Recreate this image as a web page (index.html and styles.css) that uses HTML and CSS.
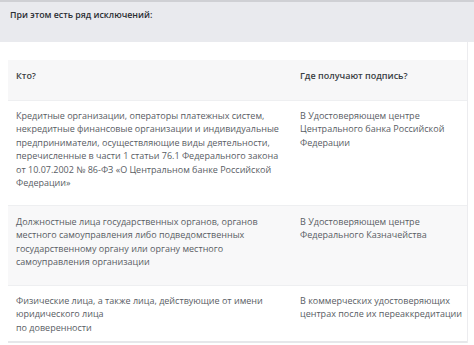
FILE: index.html
```html
<!DOCTYPE html>
<html lang="ru">
<head>
<meta charset="utf-8">
<link rel="stylesheet" href="styles.css">
</head>
<body>
<div class="band">
  <p class="title">При этом есть ряд исключений:</p>
</div>
<div class="wrap">
  <div class="tbl">
    <div class="row head">
      <div class="cell">Кто?</div>
      <div class="cell">Где получают подпись?</div>
    </div>
    <div class="row r1">
      <div class="cell">Кредитные организации, операторы платежных систем, некредитные финансовые организации и индивидуальные предприниматели, осуществляющие виды деятельности, перечисленные в части 1 статьи 76.1 Федерального закона от 10.07.2002 № 86-ФЗ «О Центральном банке Российской Федерации»</div>
      <div class="cell">В Удостоверяющем центре<br>Центрального банка Российской Федерации</div>
    </div>
    <div class="row r2 alt">
      <div class="cell">Должностные лица государственных органов, органов местного самоуправления либо подведомственных государственному органу или органу местного самоуправления организации</div>
      <div class="cell">В Удостоверяющем центре<br>Федерального Казначейства</div>
    </div>
    <div class="row r3">
      <div class="cell">Физические лица, а также лица, действующие от имени юридического лица<br>по доверенности</div>
      <div class="cell">В коммерческих удостоверяющих центрах после их переаккредитации</div>
    </div>
  </div>
</div>
</body>
</html>
```
FILE: styles.css
```css
html, body {
  margin: 0;
  padding: 0;
  background: #ffffff;
}
body {
  font-family: "Open Sans", "Noto Sans", sans-serif;
  width: 474px;
  height: 345px;
  overflow: hidden;
}
.band {
  height: 40px;
  background: #e9eaee;
  border-top: 2px solid #cfd0d4;
}
.title {
  margin: 0;
  padding: 6px 0 0 10px;
  font-size: 8.8px;
  font-weight: 600;
  color: #2b2e33;
  line-height: 14px;
}
.wrap {
  margin-right: 6px;
  padding: 18px 0 0 8px;
  border-right: 1px solid #ececef;
}
.tbl {
  width: 459px;
  font-size: 9px;
  line-height: 13.4px;
  color: #595d64;
}
.row {
  display: grid;
  grid-template-columns: 284px 175px;
  box-sizing: border-box;
}
.cell {
  padding: 0 8px 0 8px;
}
.row .cell + .cell {
  padding-right: 4px;
}
.head {
  background: #f7f7f8;
  height: 41px;
  padding-top: 9px;
  font-weight: 600;
  color: #3a3e44;
  border-bottom: 1px solid #eeeff1;
}
.r1 {
  height: 105px;
  padding-top: 8px;
  border-bottom: 1px solid #eeeff1;
}
.r2 {
  height: 80px;
  padding-top: 9px;
  border-bottom: 1px solid #eeeff1;
}
.alt { background: #f8f8f9; }
.r3 {
  height: 57px;
  padding-top: 8px;
  border-bottom: 2px solid #e6e7ea;
}
```
